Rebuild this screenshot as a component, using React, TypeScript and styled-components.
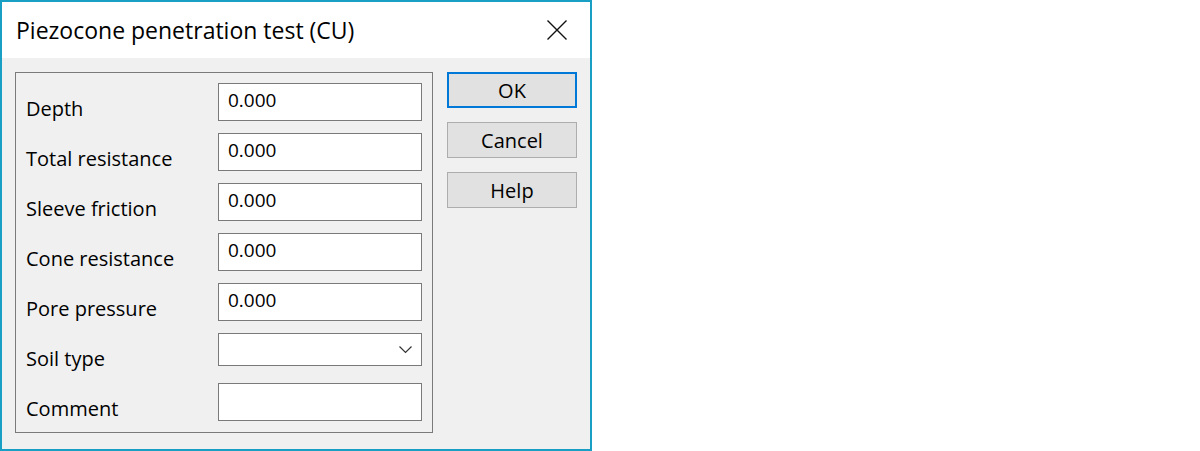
import React, { FC } from "react";
import styled, { createGlobalStyle } from "styled-components";

const GlobalStyle = createGlobalStyle`
  html, body {
    margin: 0;
    padding: 0;
    background: #ffffff;
  }
  * {
    box-sizing: border-box;
  }
`;

const Window = styled.div`
  display: flex;
  flex-direction: column;
  width: 592px;
  height: 451px;
  border: 2px solid #199fc3;
  background-color: #f0f0f0;
  font-family: "Open Sans", "Noto Sans", sans-serif;
  color: #000;
`;

const TitleBar = styled.div`
  display: flex;
  align-items: center;
  height: 56px;
  padding: 0 23px 0 14px;
  background-color: #ffffff;
`;

const Title = styled.div`
  font-size: 23px;
  flex: 1;
  white-space: nowrap;
`;

const CloseButton = styled.div`
  display: flex;
  width: 20px;
  height: 20px;
`;

const Body = styled.div`
  display: flex;
  align-items: flex-start;
  gap: 14px;
  padding: 14px 0 0 13px;
`;

const GroupBox = styled.div`
  display: grid;
  grid-template-columns: 192px 204px;
  grid-auto-rows: 38px;
  row-gap: 12px;
  width: 418px;
  height: 361px;
  padding: 10px 0 0 10px;
  border: 1px solid #7a7a7a;
`;

const Label = styled.div`
  font-size: 20px;
  line-height: 24px;
  padding-top: 14px;
  white-space: nowrap;
`;

interface IFieldProps {
  short?: boolean;
}
const Field = styled.div<IFieldProps>`
  display: flex;
  align-items: flex-start;
  justify-content: space-between;
  height: ${({ short }): string => (short ? "33px" : "38px")};
  padding: 4px 9px 0 9px;
  border: 1px solid #7a7a7a;
  background-color: #ffffff;
  font-size: 19px;
  line-height: 24px;
`;

const Chevron = styled.svg`
  margin-top: 8px;
`;

const ButtonColumn = styled.div`
  display: flex;
  flex-direction: column;
  gap: 14px;
`;

interface IButtonProps {
  primary?: boolean;
}
const Button = styled.div<IButtonProps>`
  display: flex;
  align-items: center;
  justify-content: center;
  width: 130px;
  height: 36px;
  border: ${({ primary }): string => (primary ? "2px solid #0078d7" : "1px solid #adadad")};
  background-color: #e1e1e1;
  font-size: 20px;
`;

const rows = [
  { label: "Depth", value: "0.000" },
  { label: "Total resistance", value: "0.000" },
  { label: "Sleeve friction", value: "0.000" },
  { label: "Cone resistance", value: "0.000" },
  { label: "Pore pressure", value: "0.000" },
];

const App: FC = () => {
  return (
    <>
      <GlobalStyle />
      <Window>
        <TitleBar>
          <Title>Piezocone penetration test (CU)</Title>
          <CloseButton>
            <svg width="20" height="20" viewBox="0 0 20 20">
              <path d="M0.5 0.5 L19.5 19.5 M19.5 0.5 L0.5 19.5" stroke="#111" strokeWidth="1.4" fill="none" />
            </svg>
          </CloseButton>
        </TitleBar>
        <Body>
          <GroupBox>
            {rows.map((row) => (
              <React.Fragment key={row.label}>
                <Label>{row.label}</Label>
                <Field>{row.value}</Field>
              </React.Fragment>
            ))}
            <Label>Soil type</Label>
            <Field short>
              <span />
              <Chevron width="13" height="8" viewBox="0 0 13 8">
                <path d="M0.5 0.5 L6.5 6.5 L12.5 0.5" stroke="#333" strokeWidth="1.2" fill="none" />
              </Chevron>
            </Field>
            <Label>Comment</Label>
            <Field />
          </GroupBox>
          <ButtonColumn>
            <Button primary>OK</Button>
            <Button>Cancel</Button>
            <Button>Help</Button>
          </ButtonColumn>
        </Body>
      </Window>
    </>
  );
};

export default App;
